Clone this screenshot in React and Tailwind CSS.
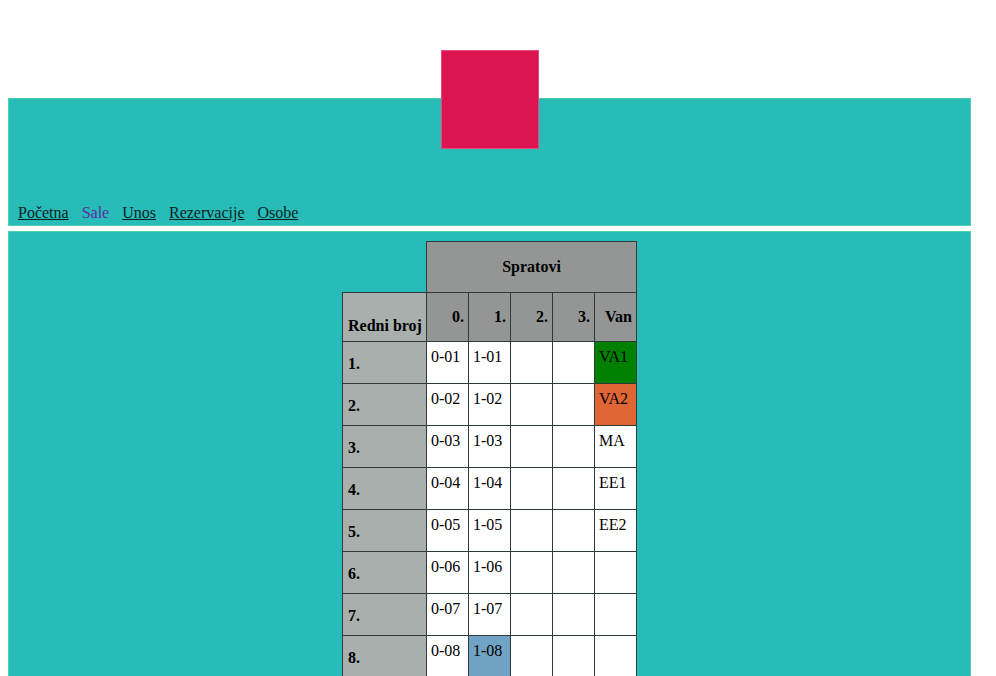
const links = [
  { label: 'Početna' },
  { label: 'Sale', active: true },
  { label: 'Unos' },
  { label: 'Rezervacije' },
  { label: 'Osobe' },
]

const heads = ['0.', '1.', '2.', '3.', 'Van']

const rows = [
  { n: '1.', c: ['0-01', '1-01', '', '', 'VA1'], bg: { 4: 'bg-[#008000]' } },
  { n: '2.', c: ['0-02', '1-02', '', '', 'VA2'], bg: { 4: 'bg-[#df6535]' } },
  { n: '3.', c: ['0-03', '1-03', '', '', 'MA'] },
  { n: '4.', c: ['0-04', '1-04', '', '', 'EE1'] },
  { n: '5.', c: ['0-05', '1-05', '', '', 'EE2'] },
  { n: '6.', c: ['0-06', '1-06', '', '', ''] },
  { n: '7.', c: ['0-07', '1-07', '', '', ''] },
  { n: '8.', c: ['0-08', '1-08', '', '', ''], bg: { 1: 'bg-[#70a3c4]' } },
  { n: '9.', c: ['0-09', '1-09', '', '', ''] },
  { n: '10.', c: ['0-10', '1-10', '', '', ''] },
]

export default function App() {
  return (
    <div className="min-h-screen bg-white pt-[50px] text-[16px] text-black" style={{ fontFamily: '"Liberation Serif", "Times New Roman", serif' }}>
      <div className="flex justify-center w-[963px] ml-2 mb-[-51px] relative z-10">
        <div className="w-[98px] h-[99px] bg-[#dc1552] border border-[#e4507c]" />
      </div>

      <header className="w-[963px] ml-2 h-[128px] bg-[#27bcb7] border border-[#4fd3a4] flex items-end px-[9px] pb-[3px]">
        <nav className="flex gap-[13px] leading-[18px]">
          {links.map((l) => (
            <a
              key={l.label}
              href="#"
              className={l.active ? 'text-[#5b2fa8] no-underline' : 'text-[#0d1f1f] underline'}
            >
              {l.label}
            </a>
          ))}
        </nav>
      </header>

      <main className="w-[963px] ml-2 mt-[5px] bg-[#27bcb7] border border-[#4fd3a4] pt-[9px] pb-6 flex justify-center">
        <table className="border-collapse">
          <thead>
            <tr className="h-[51px]">
              <th className="w-[84px] p-0" />
              <th colSpan={5} className="bg-[#939695] border border-[#2f3b3a] font-bold text-center">
                Spratovi
              </th>
            </tr>
            <tr className="h-[49px]">
              <th className="w-[84px] bg-[#a9afad] border border-[#2f3b3a] font-bold text-left align-bottom pl-[5px] pr-[2px] pb-[3px] whitespace-nowrap">
                Redni broj
              </th>
              {heads.map((h) => (
                <th key={h} className="w-[42px] bg-[#939695] border border-[#2f3b3a] font-bold text-right px-[4px]">
                  {h}
                </th>
              ))}
            </tr>
          </thead>
          <tbody>
            {rows.map((r) => (
              <tr key={r.n} className="h-[42px]">
                <th className="bg-[#a9afad] border border-[#2f3b3a] font-bold text-left align-bottom px-[5px] pb-[7px]">
                  {r.n}
                </th>
                {r.c.map((v, i) => (
                  <td
                    key={i}
                    className={`border border-[#2f3b3a] align-top px-[4px] pt-[3px] whitespace-nowrap ${r.bg?.[i] || 'bg-white'}`}
                  >
                    {v}
                  </td>
                ))}
              </tr>
            ))}
          </tbody>
        </table>
      </main>
    </div>
  )
}
